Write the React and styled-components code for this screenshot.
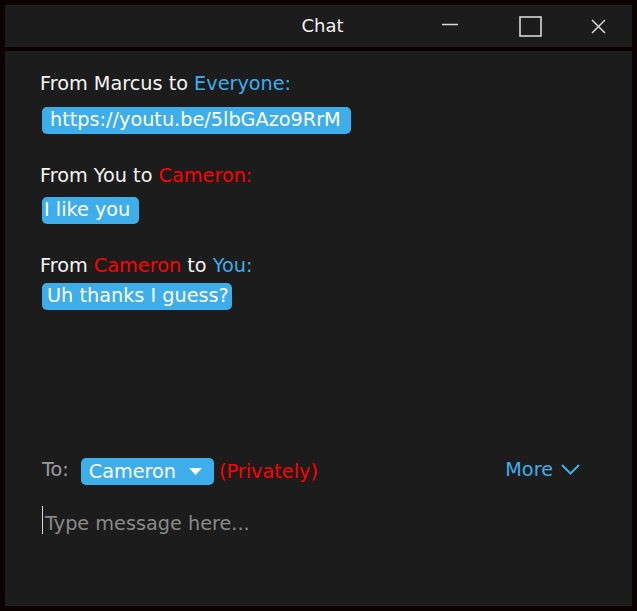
import React from "react";
import styled, { createGlobalStyle } from "styled-components";

const Global = createGlobalStyle`
  html, body { margin: 0; padding: 0; background: #0c0101; }
  body { font-family: "DejaVu Sans", Verdana, sans-serif; }
`;

const BLUE = "#3daee9";
const RED = "#ff0000";
const FS = "19.25px";

const Window = styled.div`
  width: 637px;
  height: 611px;
  box-sizing: border-box;
  padding: 5px;
  display: flex;
  flex-direction: column;
  gap: 4px;
  background: #0c0101;
`;

const TitleBar = styled.div`
  height: 42px;
  flex: none;
  background: #1c1c1c;
  display: grid;
  grid-template-columns: 1fr auto 1fr;
  align-items: center;
  padding-left: 8px;
`;

const Title = styled.div`
  grid-column: 2;
  color: #f2f2f2;
  font-size: 18px;
  line-height: 24px;
`;

const Controls = styled.div`
  grid-column: 3;
  justify-self: end;
  display: flex;
  height: 100%;
`;

const ControlButton = styled.div`
  width: ${(p) => p.$w}px;
  height: 100%;
  display: flex;
  align-items: center;
  justify-content: center;
  color: #d8d8d8;
`;

const Panel = styled.div`
  flex: 1;
  background: #1c1c1c;
  display: flex;
  flex-direction: column;
  padding-left: 35px;
  min-height: 0;
`;

const Messages = styled.div`
  padding-top: 21px;
  display: flex;
  flex-direction: column;
  gap: 30px;
`;

const Message = styled.div`
  display: flex;
  flex-direction: column;
  align-items: flex-start;
`;

const Header = styled.div`
  font-size: ${FS};
  line-height: 24px;
  color: #f4f4f4;
  white-space: nowrap;
`;

const Name = styled.span`
  color: ${(p) => (p.$tone === "red" ? RED : p.$tone === "blue" ? BLUE : "#f4f4f4")};
`;

const Bubble = styled.div`
  margin-top: ${(p) => p.$gap}px;
  margin-left: ${(p) => p.$x}px;
  background: ${BLUE};
  color: #ffffff;
  border-radius: 5px;
  font-size: ${FS};
  line-height: 24px;
  padding: 1px ${(p) => p.$pr}px 2px ${(p) => p.$pl}px;
  white-space: nowrap;
`;

const Compose = styled.div`
  margin-top: auto;
  padding-bottom: 72px;
  display: flex;
  flex-direction: column;
`;

const ToRow = styled.div`
  display: flex;
  align-items: flex-start;
  padding-right: 52px;
  padding-left: 2px;
`;

const ToLabel = styled.div`
  font-size: ${FS};
  line-height: 24px;
  color: #9c9c9c;
  margin-right: 12px;
`;

const Select = styled.div`
  background: ${BLUE};
  border-radius: 5px;
  height: 27px;
  box-sizing: border-box;
  padding: 2px 12px 1px 8px;
  display: flex;
  align-items: flex-start;
  color: #fff;
  font-size: ${FS};
  line-height: 24px;
`;

const Caret = styled.svg`
  margin-left: 13px;
  margin-top: 8px;
  flex: none;
`;

const Private = styled.div`
  margin-left: 5px;
  padding-top: 2px;
  font-size: ${FS};
  line-height: 24px;
  color: ${RED};
`;

const More = styled.div`
  margin-left: auto;
  display: flex;
  align-items: flex-start;
  color: ${BLUE};
  font-size: ${FS};
  line-height: 24px;
  gap: 8px;
`;

const Chevron = styled.svg`
  margin-top: 6px;
  flex: none;
`;

const InputRow = styled.div`
  margin-top: 21px;
  padding-left: 2px;
  display: flex;
  align-items: flex-start;
  height: 28px;
`;

const TextCaret = styled.div`
  width: 1px;
  height: 28px;
  background: #d8d8d8;
  flex: none;
`;

const Placeholder = styled.div`
  margin-left: 2px;
  padding-top: 6px;
  font-size: ${FS};
  line-height: 24px;
  color: #8a8a8a;
  white-space: nowrap;
`;

export default function App() {
  return (
    <>
      <Global />
      <Window>
        <TitleBar>
          <Title>Chat</Title>
          <Controls>
            <ControlButton $w={92}>
              <svg width="16" height="16" viewBox="0 0 16 16">
                <line x1="0" y1="6.5" x2="16" y2="6.5" stroke="currentColor" strokeWidth="1.5" />
              </svg>
            </ControlButton>
            <ControlButton $w={68}>
              <svg width="23" height="21" viewBox="0 0 23 21">
                <rect x="1" y="1" width="21" height="19" fill="none" stroke="currentColor" strokeWidth="1.6" />
              </svg>
            </ControlButton>
            <ControlButton $w={68}>
              <svg width="15" height="15" viewBox="0 0 15 15">
                <path d="M1 1 L14 14 M14 1 L1 14" stroke="currentColor" strokeWidth="1.5" />
              </svg>
            </ControlButton>
          </Controls>
        </TitleBar>
        <Panel>
          <Messages>
            <Message>
              <Header>
                From Marcus to <Name $tone="blue">Everyone:</Name>
              </Header>
              <Bubble $gap={11} $x={2} $pl={8} $pr={10}>
                https://youtu.be/5lbGAzo9RrM
              </Bubble>
            </Message>
            <Message>
              <Header>
                From You to <Name $tone="red">Cameron:</Name>
              </Header>
              <Bubble $gap={9} $x={2} $pl={2} $pr={9}>
                I like you
              </Bubble>
            </Message>
            <Message>
              <Header>
                From <Name $tone="red">Cameron</Name> to <Name $tone="blue">You:</Name>
              </Header>
              <Bubble $gap={5} $x={2} $pl={5} $pr={3}>
                Uh thanks I guess?
              </Bubble>
            </Message>
          </Messages>
          <Compose>
            <ToRow>
              <ToLabel>To:</ToLabel>
              <Select>
                Cameron
                <Caret width="13" height="7" viewBox="0 0 13 7">
                  <path d="M0 0 L13 0 L6.5 7 Z" fill="#fff" />
                </Caret>
              </Select>
              <Private>(Privately)</Private>
              <More>
                More
                <Chevron width="19" height="11" viewBox="0 0 19 11">
                  <path d="M1 1 L9.5 9.5 L18 1" fill="none" stroke={BLUE} strokeWidth="2" />
                </Chevron>
              </More>
            </ToRow>
            <InputRow>
              <TextCaret />
              <Placeholder>Type message here...</Placeholder>
            </InputRow>
          </Compose>
        </Panel>
      </Window>
    </>
  );
}
